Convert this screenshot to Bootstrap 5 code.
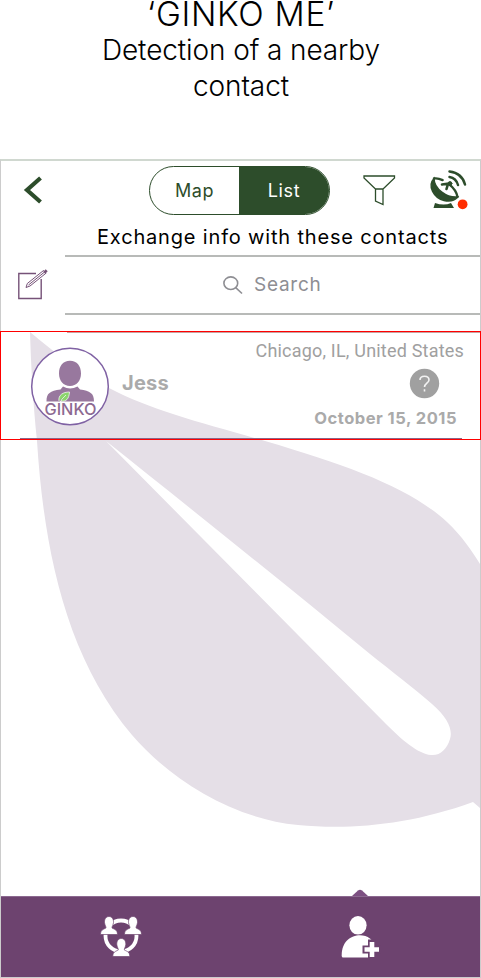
<!DOCTYPE html>
<html lang="en">
<head>
<meta charset="utf-8">
<meta name="viewport" content="width=device-width, initial-scale=1">
<title>Ginko Me</title>
<link href="https://cdn.jsdelivr.net/npm/bootstrap@5.3.0/dist/css/bootstrap.min.css" rel="stylesheet">
<style>
body{font-family:Inter,"Liberation Sans",sans-serif;background:#fff;color:#000;width:481px;height:978px;overflow:hidden}
svg{display:block;flex:none}
.intro{height:159px}
.intro h1{font-size:33.5px;line-height:28px;font-weight:300;margin:0 0 0 1px;letter-spacing:.7px}
.intro p{font-size:28px;line-height:36px;font-weight:300;margin:4px 0 0 1px;letter-spacing:-.1px}
.phone{height:819px;border:1px solid #ccc;border-top:2px solid #d0d8d0}
.leaf{left:0;top:171px;z-index:0}
.topbar{height:58px;padding-left:22px}
.toggle{width:181px;height:49px;margin-left:106px;border:1px solid #2d4d2b;border-radius:25px;overflow:hidden;font-size:18px}
.toggle span{width:89px;color:#2d4d2b;letter-spacing:.6px}
.toggle .on{background:#2d4d2b;color:#fff;width:90px}
.caption{height:36px;padding-left:96px;font-size:20px;line-height:37px;letter-spacing:.83px;white-space:nowrap}
.tools{height:60px}
.edit{width:64px;padding-left:16px}
.search{border-top:2px solid #b8bab8;border-bottom:2px solid #b8bab8;color:#8e8e93;font-size:19px;height:60px;letter-spacing:.75px}
.contact{height:109px;margin:16px -1px 0;border:1px solid #f00;color:#aaa;padding-right:16px;position:relative;z-index:1}
.contact::after{content:"";position:absolute;left:66px;right:0;top:0;height:1px;background:#c9a0a0}
.avatar{margin:14px 0 0 29px}
.person{font-size:20px;font-weight:700;margin:39px 0 0 12px;line-height:24px;color:#aaa;letter-spacing:.2px}
.where{font-family:Roboto,sans-serif;font-size:18px;line-height:22px;margin-top:8px;color:#a0a0a0;letter-spacing:.2px}
.when{font-size:16.5px;font-weight:700;line-height:20px;margin:9px 7px 0 0;letter-spacing:.5px}
.badge-q{margin:6px 24px 0 0}
.rule-bottom{height:2px;width:442px;margin:-2px 0 0 19px;background:#8c6689;position:relative;z-index:0}
.tabs{height:81px;background:#6d436f;border-top:1px solid #8c6990}
.tab-mark{margin-left:350px}
</style>
<script src="https://cdn.jsdelivr.net/npm/bootstrap@5.3.0/dist/js/bootstrap.bundle.min.js"></script>
</head>
<body>
<header class="intro text-center">
<h1>‘GINKO ME’</h1>
<p>Detection of a nearby<br>contact</p>
</header>
<main class="phone position-relative d-flex flex-column">
<svg class="leaf position-absolute" width="479" height="532" viewBox="1 332 479 532">
<path fill="#e5dfe7" d="M30 332C55 353 79 372 109 388C150 410 203 423 265 441C350 466 410 488 447 522C462 536 472 551 480 564V808L473 802C410 825 350 830 298 825C230 818 170 779 132 735C66 657 44 550 37 441C33 402 31 366 30 332Z"/>
<path fill="#fff" d="M106 441C190 508 285 584 370 654C390 670 416 690 432 704C448 718 453 730 450 739C447 749 440 756 431 755C418 754 401 739 386 724Z"/>
</svg>
<nav class="topbar d-flex align-items-center position-relative">
<svg width="20" height="28" viewBox="0 0 20 28"><path d="M17.500 2L4 14L17.500 26" fill="none" stroke="#2d4d2b" stroke-width="4.200"/></svg>
<div class="toggle d-flex"><span class="d-flex align-items-center justify-content-center">Map</span><span class="on d-flex align-items-center justify-content-center">List</span></div>
<svg width="34" height="34" viewBox="362 172 34 34" style="margin-left:32px"><path d="M364 175H394.500V177L383 188V203.500L375.500 200V188L364 177ZM375.500 188H383" fill="none" stroke="#2d4d2b" stroke-width="1.300"/></svg>
<svg width="42" height="42" viewBox="428 169 42 42" style="margin-left:32px">
<g fill="none" stroke="#2d4d2b" stroke-linecap="round"><path d="M434 178.500C427 186 434 198 444 200.500C450 202 455 200 457.500 197C447 198 434 189 434 178.500Z" fill="#2d4d2b" stroke-width="1.500"/><path d="M434 178.500C442 177 456 187 457.500 197" stroke-width="2.400" stroke-dasharray="9 7 20"/><path d="M442 184.500L449 183.500M448 184L446.500 189" stroke-width="2.600"/><circle cx="450" cy="183.500" r="1.900" fill="#2d4d2b"/><path d="M449.500 177Q456 178 458 185M449.500 171.500Q462 173 465 184.500" stroke-width="2.500"/></g>
<path d="M435 203Q444 206 451 203L454 208H433.500Z" fill="#2d4d2b"/><circle cx="462.600" cy="204.300" r="4.900" fill="#ff2d00"/></svg>
</nav>
<div class="caption position-relative">Exchange info with these contacts</div>
<div class="tools d-flex position-relative">
<div class="edit d-flex align-items-center"><svg width="32" height="36" viewBox="17 268 32 36"><g fill="none" stroke="#765278"><path d="M36 274.500H18.800V299.500H41.200V280" stroke-width="1.400"/><path d="M26 288.500L27.300 284.500L43.500 271.500L46 274.200L30 287ZM28.500 286L44.500 273" stroke-width="1"/><path d="M44.500 271.500L46.500 273.500" stroke-width="3.400"/></g></svg></div>
<div class="search flex-grow-1 d-flex align-items-center"><svg width="21" height="20" viewBox="222 275 21 20" style="margin-left:157px"><g fill="none" stroke="#8e8e93" stroke-width="1.600"><ellipse cx="230.800" cy="283.200" rx="6.900" ry="6.300"/><path d="M235.700 287.700L242 293.500"/></g></svg><span style="margin-left:11px">Search</span></div>
</div>
<section class="contact d-flex">
<svg class="avatar" width="80" height="80" viewBox="29 346 80 80"><circle cx="69" cy="386.500" r="38.300" fill="#fff" stroke="#8062a4" stroke-width="1.500"/><path fill="#98789e" d="M69 360.800C76 360.800 80 366 80 373.500C80 381 75.500 386 69 386C62.500 386 58 381 58 373.500C58 366 62 360.800 69 360.800ZM62 386.500Q69 390.500 76.500 386.500L79 389.500C89 391 93 393 93 401.500H45.500C45.500 393 49 391 59.500 389.500Z"/><path d="M58 401C57 395 62 392 68.500 392C68 399 65 402 60 401L58.500 403.500Q60 399 65 395" fill="#8bd56d" stroke="#fff" stroke-width=".7"/><text x="43.500" y="414.500" textLength="52" lengthAdjust="spacingAndGlyphs" font-family="Inter, sans-serif" font-size="16" font-weight="500" fill="#8d6a91">GINKO</text></svg>
<div class="person">Jess</div>
<div class="flex-grow-1 d-flex flex-column align-items-end">
<div class="where">Chicago, IL, United States</div>
<svg class="badge-q" width="31" height="31" viewBox="0 0 31 31"><circle cx="15.500" cy="15.500" r="14.700" fill="#a0a0a0"/><path d="M11 12C11 7 20 7 20 12C20 15 15.500 15.500 15.500 19M15.500 21.200V23.400" fill="none" stroke="#f2f2f2" stroke-width="1.600"/></svg>
<div class="when">October 15, 2015</div>
</div>
</section>
<div class="rule-bottom"></div>
<footer class="mt-auto position-relative">
<svg class="tab-mark" width="18" height="7" viewBox="0 0 18 7"><path d="M1 7L7 1.500Q9 0 11 1.500L17 7Z" fill="#7d5082"/></svg>
<div class="tabs d-flex">
<svg width="42" height="42" viewBox="100 915 42 42" style="margin:18px 0 0 99px"><circle cx="121" cy="936" r="15.500" fill="none" stroke="#fff" stroke-width="3.800"/>
<g fill="#fff" stroke="#6d436f" stroke-width=".7"><path id="peer" d="M109 916.500C112 916.500 113.700 919 113.500 922.500C113.300 925 112 926 112 928C115 929.500 117.500 930 117.500 934.500H100.500C100.500 930 103 929.500 106 928C106 926 104.700 925 104.500 922.500C104.300 919 106 916.500 109 916.500Z"/><use href="#peer" x="24"/><use href="#peer" x="12.300" y="22"/></g></svg>
<svg width="40" height="44" viewBox="341 915 40 44" style="margin:18px 0 0 199px"><g fill="#fff"><ellipse cx="358" cy="925.300" rx="8.600" ry="9.300"/><path d="M343 957.500Q342 957.500 341.700 956C341 930 374 930 374.500 948V957.500Z"/></g><path d="M372 939.500V959M362.500 949.500H381" stroke="#6d436f" stroke-width="8"/><path d="M372 942V957M364.500 949.500H379" stroke="#fff" stroke-width="4.600"/></svg>
</div>
</footer>
</main>
</body>
</html>
